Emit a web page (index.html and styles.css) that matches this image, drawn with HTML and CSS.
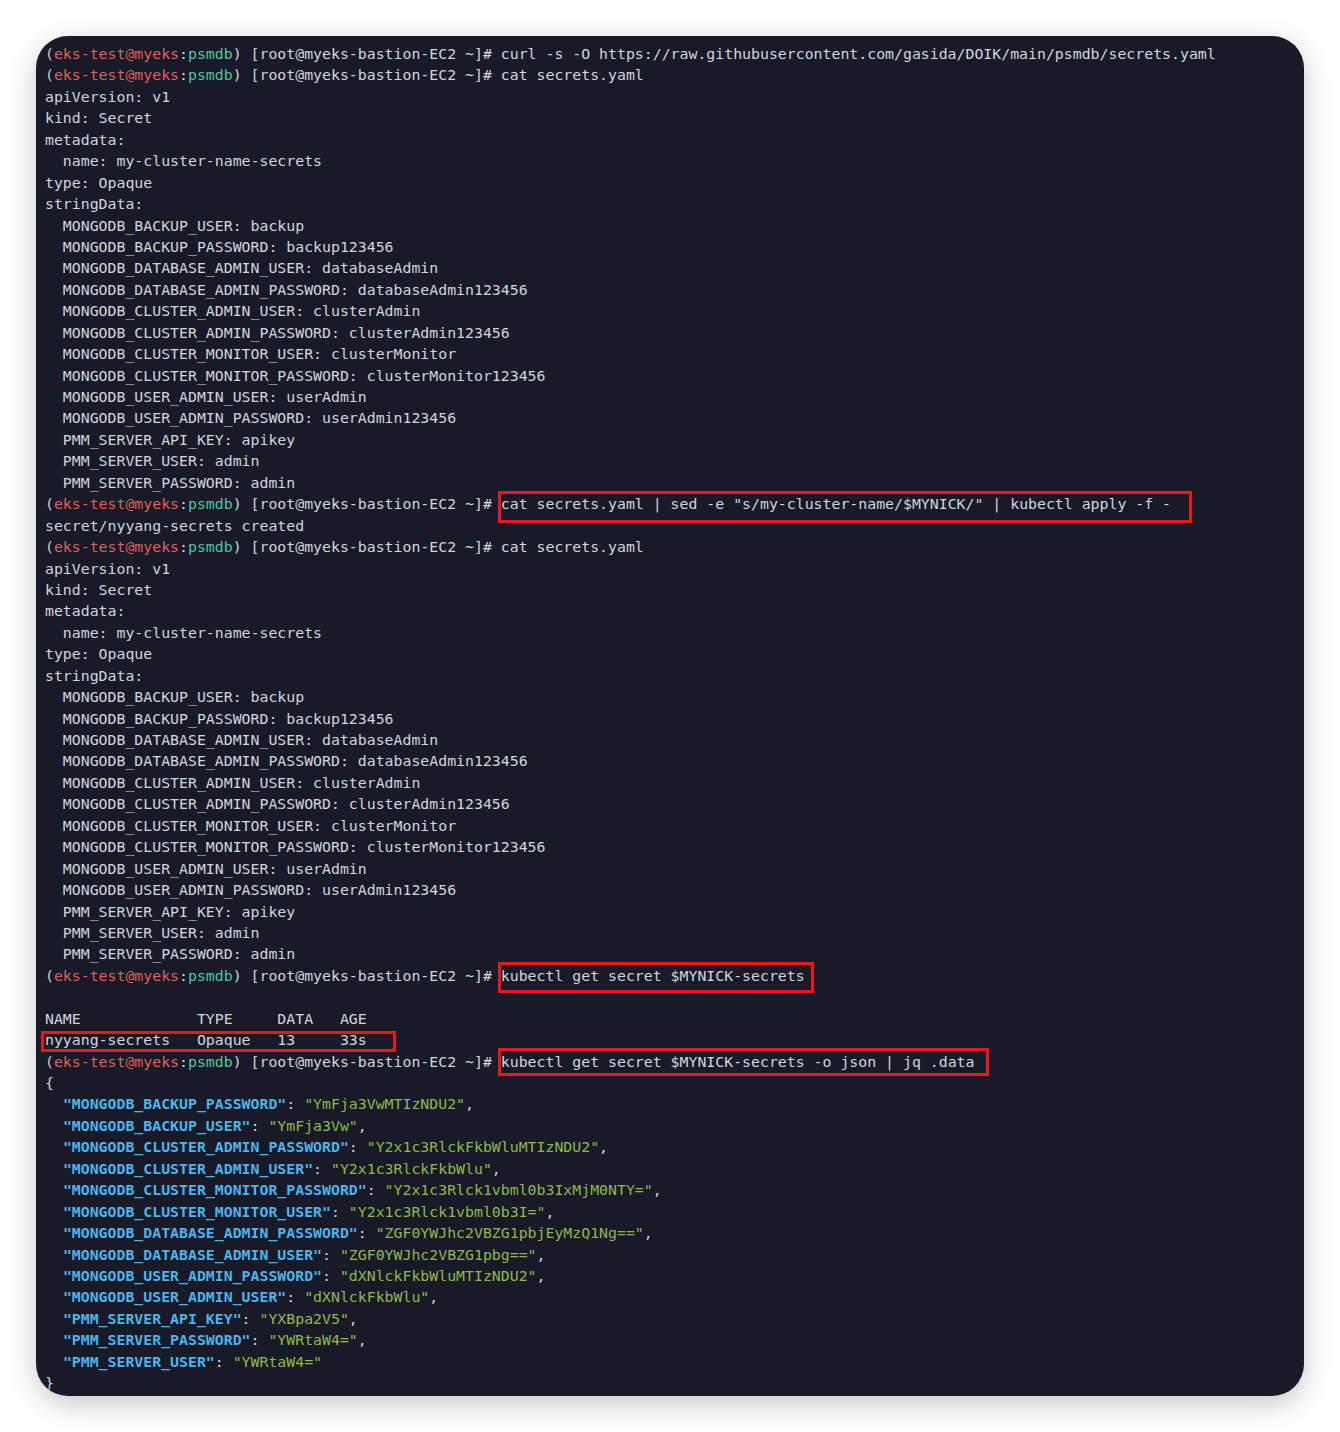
FILE: index.html
```html
<!DOCTYPE html>
<html lang="en">
<head>
    <meta charset="UTF-8">
    <meta name="viewport" content="width=device-width, initial-scale=1.0">
    <title>psmdb secrets</title>
    <link rel="stylesheet" href="styles.css">
</head>
<body>
    <!-- Terminal window -->
    <div class="terminal">
<pre class="screen">(<span class="pu">eks-test@myeks</span>:<span class="pd">psmdb</span>) [root@myeks-bastion-EC2 ~]# curl -s -O https://raw.githubusercontent.com/gasida/DOIK/main/psmdb/secrets.yaml
(<span class="pu">eks-test@myeks</span>:<span class="pd">psmdb</span>) [root@myeks-bastion-EC2 ~]# cat secrets.yaml
apiVersion: v1
kind: Secret
metadata:
  name: my-cluster-name-secrets
type: Opaque
stringData:
  MONGODB_BACKUP_USER: backup
  MONGODB_BACKUP_PASSWORD: backup123456
  MONGODB_DATABASE_ADMIN_USER: databaseAdmin
  MONGODB_DATABASE_ADMIN_PASSWORD: databaseAdmin123456
  MONGODB_CLUSTER_ADMIN_USER: clusterAdmin
  MONGODB_CLUSTER_ADMIN_PASSWORD: clusterAdmin123456
  MONGODB_CLUSTER_MONITOR_USER: clusterMonitor
  MONGODB_CLUSTER_MONITOR_PASSWORD: clusterMonitor123456
  MONGODB_USER_ADMIN_USER: userAdmin
  MONGODB_USER_ADMIN_PASSWORD: userAdmin123456
  PMM_SERVER_API_KEY: apikey
  PMM_SERVER_USER: admin
  PMM_SERVER_PASSWORD: admin
(<span class="pu">eks-test@myeks</span>:<span class="pd">psmdb</span>) [root@myeks-bastion-EC2 ~]# <span class="mark mark-sed">cat secrets.yaml | sed -e "s/my-cluster-name/$MYNICK/" | kubectl apply -f -</span>
secret/nyyang-secrets created
(<span class="pu">eks-test@myeks</span>:<span class="pd">psmdb</span>) [root@myeks-bastion-EC2 ~]# cat secrets.yaml
apiVersion: v1
kind: Secret
metadata:
  name: my-cluster-name-secrets
type: Opaque
stringData:
  MONGODB_BACKUP_USER: backup
  MONGODB_BACKUP_PASSWORD: backup123456
  MONGODB_DATABASE_ADMIN_USER: databaseAdmin
  MONGODB_DATABASE_ADMIN_PASSWORD: databaseAdmin123456
  MONGODB_CLUSTER_ADMIN_USER: clusterAdmin
  MONGODB_CLUSTER_ADMIN_PASSWORD: clusterAdmin123456
  MONGODB_CLUSTER_MONITOR_USER: clusterMonitor
  MONGODB_CLUSTER_MONITOR_PASSWORD: clusterMonitor123456
  MONGODB_USER_ADMIN_USER: userAdmin
  MONGODB_USER_ADMIN_PASSWORD: userAdmin123456
  PMM_SERVER_API_KEY: apikey
  PMM_SERVER_USER: admin
  PMM_SERVER_PASSWORD: admin
(<span class="pu">eks-test@myeks</span>:<span class="pd">psmdb</span>) [root@myeks-bastion-EC2 ~]# <span class="mark mark-get">kubectl get secret $MYNICK-secrets</span>

NAME             TYPE     DATA   AGE
<span class="mark mark-row">nyyang-secrets   Opaque   13     33s</span>
(<span class="pu">eks-test@myeks</span>:<span class="pd">psmdb</span>) [root@myeks-bastion-EC2 ~]# <span class="mark mark-json">kubectl get secret $MYNICK-secrets -o json | jq .data</span>
{
  <span class="k">"MONGODB_BACKUP_PASSWORD"</span>: <span class="v">"YmFja3VwMTIzNDU2"</span>,
  <span class="k">"MONGODB_BACKUP_USER"</span>: <span class="v">"YmFja3Vw"</span>,
  <span class="k">"MONGODB_CLUSTER_ADMIN_PASSWORD"</span>: <span class="v">"Y2x1c3RlckFkbWluMTIzNDU2"</span>,
  <span class="k">"MONGODB_CLUSTER_ADMIN_USER"</span>: <span class="v">"Y2x1c3RlckFkbWlu"</span>,
  <span class="k">"MONGODB_CLUSTER_MONITOR_PASSWORD"</span>: <span class="v">"Y2x1c3Rlck1vbml0b3IxMjM0NTY="</span>,
  <span class="k">"MONGODB_CLUSTER_MONITOR_USER"</span>: <span class="v">"Y2x1c3Rlck1vbml0b3I="</span>,
  <span class="k">"MONGODB_DATABASE_ADMIN_PASSWORD"</span>: <span class="v">"ZGF0YWJhc2VBZG1pbjEyMzQ1Ng=="</span>,
  <span class="k">"MONGODB_DATABASE_ADMIN_USER"</span>: <span class="v">"ZGF0YWJhc2VBZG1pbg=="</span>,
  <span class="k">"MONGODB_USER_ADMIN_PASSWORD"</span>: <span class="v">"dXNlckFkbWluMTIzNDU2"</span>,
  <span class="k">"MONGODB_USER_ADMIN_USER"</span>: <span class="v">"dXNlckFkbWlu"</span>,
  <span class="k">"PMM_SERVER_API_KEY"</span>: <span class="v">"YXBpa2V5"</span>,
  <span class="k">"PMM_SERVER_PASSWORD"</span>: <span class="v">"YWRtaW4="</span>,
  <span class="k">"PMM_SERVER_USER"</span>: <span class="v">"YWRtaW4="</span>
}
(<span class="pu">eks-test@myeks</span>:<span class="pd">psmdb</span>) [root@myeks-bastion-EC2 ~]# <span class="cursor"> </span></pre>
    </div>
</body>
</html>
```

FILE: styles.css
```css
body {
    margin: 0;
    padding: 36px;
    background-color: #ffffff;
}

.terminal {
    width: 1268px;
    height: 1360px;
    background-color: #181a27;
    border-radius: 32px;
    overflow: hidden;
    box-shadow: 0 8px 28px rgba(0, 0, 0, 0.22);
}

.screen {
    margin: 0;
    padding: 8px 9px 0 9px;
    font-family: "DejaVu Sans Mono", "Liberation Mono", monospace;
    font-size: 14.85px;
    line-height: 21.44px;
    color: #d2d5dc;
}

/* prompt colours */
.pu {
    color: #de6058;
}

.pd {
    color: #4fc6a2;
}

/* jq output */
.k {
    color: #4db4ec;
    font-weight: bold;
}

.v {
    color: #8fb84c;
}

.cursor {
    background-color: #e8b95a;
}

/* red annotation boxes */
.mark {
    position: relative;
}

.mark::after {
    content: "";
    position: absolute;
    border: 3px solid #f0141c;
}

.mark-sed::after {
    left: -3px;
    right: -21px;
    top: -4px;
    bottom: -10px;
}

.mark-get::after {
    left: -3px;
    right: -9px;
    top: -5px;
    bottom: -8px;
}

.mark-row::after {
    left: -4px;
    right: -29px;
    top: 0;
    bottom: -3px;
}

.mark-json::after {
    left: -3px;
    right: -15px;
    top: -5px;
    bottom: -5px;
}
```
